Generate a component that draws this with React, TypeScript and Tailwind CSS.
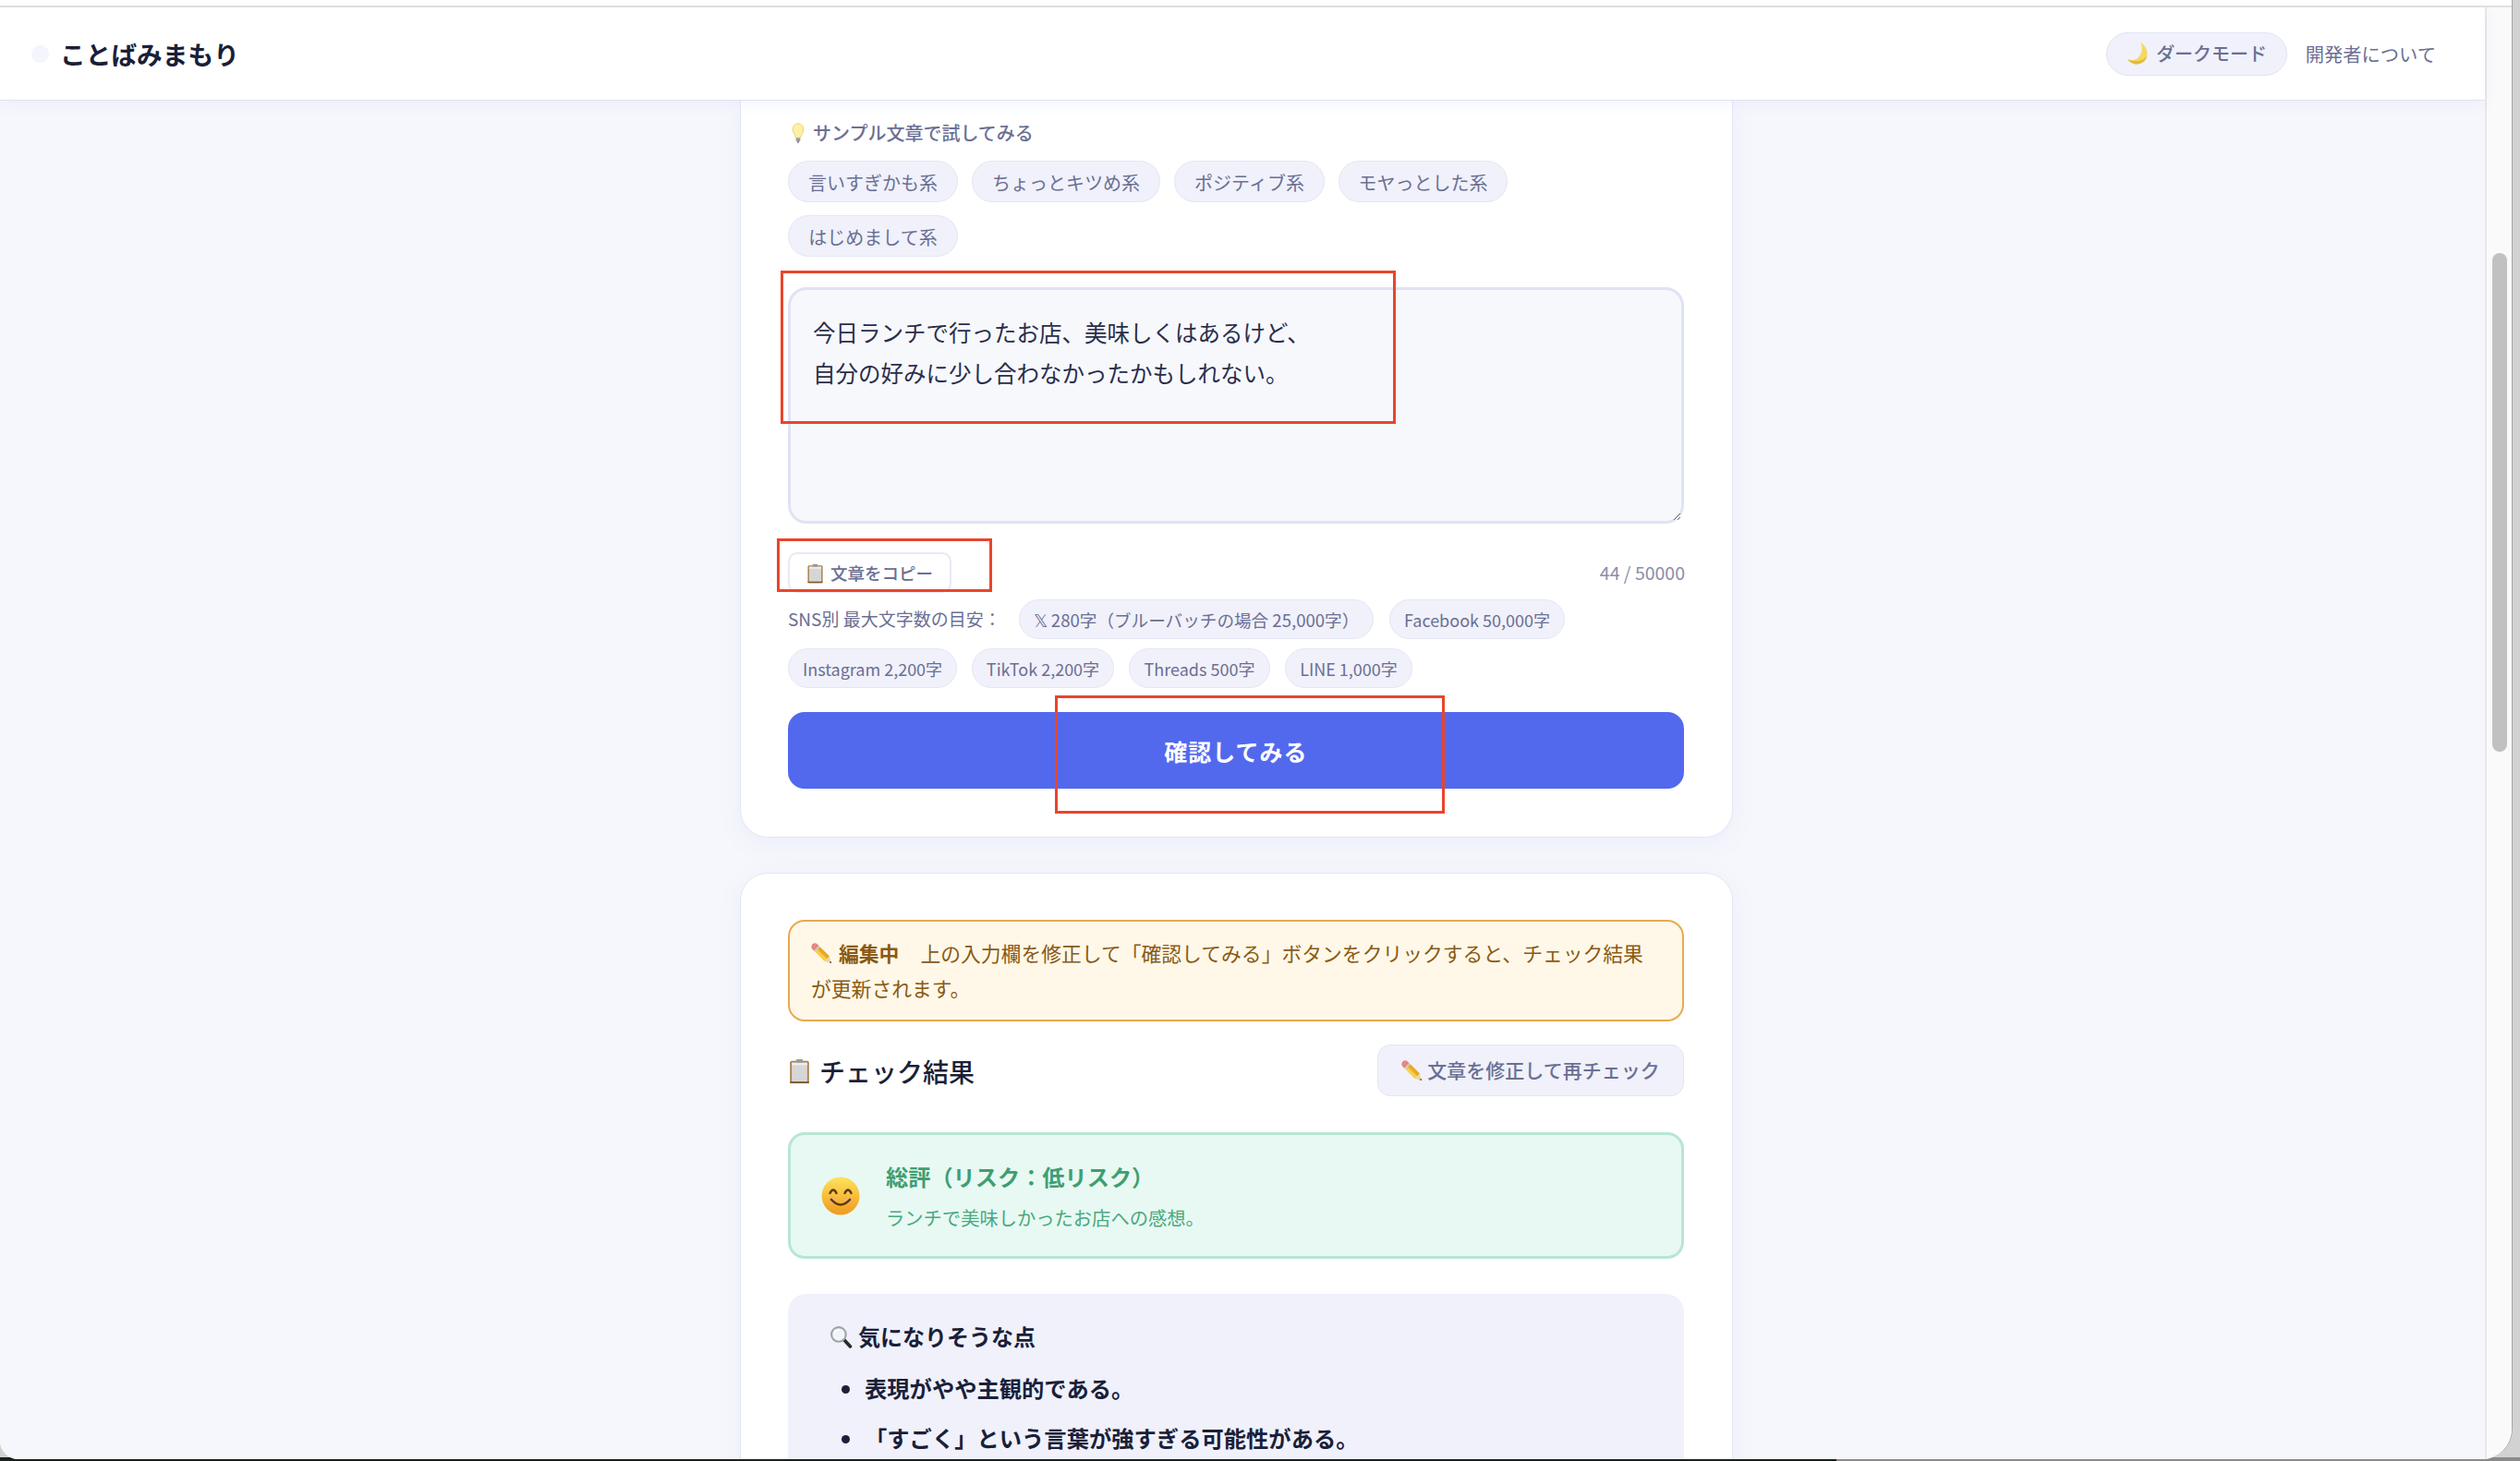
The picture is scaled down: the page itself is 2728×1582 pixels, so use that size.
const ClipboardIcon = ({ className }: { className: string }) => (
  <svg viewBox="0 0 24 30" className={className}>
    <rect x="1" y="3" width="22" height="26" rx="2" fill="#a9814a" />
    <rect x="3" y="5" width="18" height="22" fill="#d6d6d6" />
    <rect x="3" y="5" width="18" height="3" fill="#ececec" />
    <rect x="8" y="1" width="8" height="4" rx="1.5" fill="#9b9b9b" />
    <rect x="1" y="27" width="22" height="2" fill="#7d5a2c" />
  </svg>
);

const PencilIcon = ({ className }: { className: string }) => (
  <svg viewBox="0 0 24 24" className={className}>
    <path d="M.7 6.3 L6.3.7 Q4 -.5 2 1 Q-.5 3.5.7 6.3 Z" fill="#e8807c" />
    <path d="M.7 6.3 L6.3.7 L8.8 3.2 L3.2 8.8 Z" fill="#e8807c" />
    <path d="M3.2 8.8 L8.8 3.2 L10.3 4.7 L4.7 10.3 Z" fill="#c4c4c4" />
    <path d="M4.7 10.3 L10.3 4.7 L20.8 15.2 L15.2 20.8 Z" fill="#f7cf45" />
    <path d="M7.5 7.5 L10.3 4.7 L20.8 15.2 L18 18 Z" fill="#e6a92a" />
    <path d="M15.2 20.8 L20.8 15.2 L23 23 Z" fill="#ecd6a8" />
    <path d="M20.7 22.3 L22.3 20.7 L23 23 Z" fill="#333333" />
  </svg>
);

const BulbIcon = ({ className }: { className: string }) => (
  <svg viewBox="0 0 14 24" className={className}>
    <path
      d="M7 1 C3 1 1 4 1 7.5 C1 11 3.6 12.5 4.4 17 L9.6 17 C10.4 12.5 13 11 13 7.5 C13 4 11 1 7 1 Z"
      fill="#fdf0a8"
      stroke="#e8cf62"
      strokeWidth="1"
    />
    <rect x="4.6" y="17" width="4.8" height="4" rx="1" fill="#9c9ca4" />
    <path d="M5.8 21 L8.2 21 L7 23.5 Z" fill="#55555c" />
  </svg>
);

const MoonIcon = ({ className }: { className: string }) => (
  <svg viewBox="0 0 24 24" className={className}>
    <path
      d="M15 1 C19.5 4 22.5 8.5 21.5 14 C20.5 19.5 15.5 23 10 22.5 C6.5 22.2 3.5 20 2 17.5 C5 19 9 18.8 12 16.5 C16.5 13 17.5 6.5 15 1 Z"
      fill="#f6d860"
    />
    <path
      d="M21.5 14 C20.5 19.5 15.5 23 10 22.5 C6.5 22.2 3.5 20 2 17.5 C8 21 18 20 21.5 14 Z"
      fill="#e2b93e"
    />
  </svg>
);

const SmileIcon = ({ className }: { className: string }) => (
  <svg viewBox="0 0 42 42" className={className}>
    <defs>
      <linearGradient id="face" x1="0" y1="0" x2="0" y2="1">
        <stop offset="0" stopColor="#fde35c" />
        <stop offset="1" stopColor="#f09a1c" />
      </linearGradient>
    </defs>
    <circle cx="21" cy="21" r="20.5" fill="url(#face)" />
    <ellipse cx="13" cy="26" rx="5" ry="3.2" fill="#f7a98a" opacity="0.55" />
    <ellipse cx="29" cy="26" rx="5" ry="3.2" fill="#f7a98a" opacity="0.55" />
    <path d="M9.5 18 Q13 11 16.5 18" fill="none" stroke="#5d3a12" strokeWidth="2.4" strokeLinecap="round" />
    <path d="M25.5 18 Q29 11 32.5 18" fill="none" stroke="#5d3a12" strokeWidth="2.4" strokeLinecap="round" />
    <path d="M11 25 Q21 36 31 25" fill="none" stroke="#5d3a12" strokeWidth="2.6" strokeLinecap="round" />
  </svg>
);

const SearchIcon = ({ className }: { className: string }) => (
  <svg viewBox="0 0 24 24" className={className}>
    <path d="M14 14 L21.5 22" stroke="#2b2b2b" strokeWidth="3.6" strokeLinecap="round" />
    <circle cx="9.5" cy="9.5" r="7.5" fill="#f2f5f8" stroke="#9da3aa" strokeWidth="2" />
    <path d="M5 8 Q6.5 4.8 10 4.8" fill="none" stroke="#ffffff" strokeWidth="1.6" />
  </svg>
);

const samples = [
  ["言いすぎかも系", "w-[184px]"],
  ["ちょっとキツめ系", "w-[204px]"],
  ["ポジティブ系", "w-[163px]"],
  ["モヤっとした系", "w-[183px]"],
  ["はじめまして系", "w-[184px]"],
];

const snsRow = [
  ["Instagram 2,200字", "w-[183px] text-[18px]"],
  ["TikTok 2,200字", "w-[154px] text-[18px]"],
  ["Threads 500字", "w-[153px] text-[18px]"],
  ["LINE 1,000字", "w-[138px] text-[18px]"],
];

const SnsPill = ({ label, style }: { label: string; style: string }) => (
  <span
    className={`flex h-[43px] items-center justify-center rounded-[22px] border border-[#e3e6f3] bg-[#f0f1fa] pt-[1px] text-[#6b6f94] ${style}`}
  >
    {label}
  </span>
);

export default function App() {
  return (
    <div className="relative h-[1582px] w-[2728px] overflow-hidden bg-[#d2d2d2] font-['Noto_Sans_CJK_JP',sans-serif]">
      {/* desktop strip under the window */}
      <div className="absolute bottom-0 left-0 h-[4px] w-[1988px] bg-[#17211e]" />
      <div className="absolute bottom-0 left-[1988px] h-[4px] w-[740px] bg-[#8a8a8a]" />

      <div className="relative flex h-[1580px] w-[2720px] flex-col overflow-hidden rounded-bl-[20px] rounded-br-[33px] border-r border-[#a6a6a6] bg-white">
        <div className="h-[8px] shrink-0 border-b-2 border-[#e1e1e1] bg-white" />

        <div className="flex min-h-0 flex-1">
          <div className="flex min-w-0 flex-1 flex-col bg-[#f6f7fc]">
            <header className="relative z-10 flex h-[101px] shrink-0 items-center justify-between border-b border-[#dfe3f2] bg-white pr-[53px] pl-[34px] shadow-[0_3px_16px_rgba(83,107,238,0.07)]">
              <div className="flex items-center gap-[12px] pt-[2px]">
                <span className="h-[19px] w-[19px] rounded-full bg-[#f4f5fd]" />
                <span className="text-[27.7px] font-semibold text-[#1a1f3a]">ことばみまもり</span>
              </div>
              <div className="flex items-center gap-[20px]">
                <button className="flex h-[47px] w-[196px] items-center justify-center gap-[7px] rounded-[24px] border border-[#e0e3f2] bg-[#f0f1fa] text-[20px] font-medium text-[#6b6f94]">
                  <MoonIcon className="h-[26px] w-[26px]" />
                  ダークモード
                </button>
                <span className="text-[20.3px] text-[#6b6f94]">開発者について</span>
              </div>
            </header>

            <main className="flex min-h-0 flex-1 flex-col gap-[38px] overflow-hidden pl-[801px]">
              <section className="w-[1075px] shrink-0 rounded-b-[30px] border border-t-0 border-[#e3e6f3] bg-white px-[51px] pt-[26px] pb-[52px] shadow-[0_6px_28px_rgba(83,107,238,0.07)]">
                <div className="ml-[4px] flex h-[18px] items-center gap-[9px] text-[20px] font-medium text-[#6b6f94]">
                  <BulbIcon className="h-[23px] w-[14px]" />
                  サンプル文章で試してみる
                </div>
                <div className="mt-[21px] flex flex-wrap gap-x-[15px] gap-y-[14px]">
                  {samples.map(([label, width]) => (
                    <button
                      key={label}
                      className={`h-[45px] rounded-[23px] border border-[#e3e6f3] bg-[#f0f1fa] pt-[2px] text-[20px] text-[#6b6f94] ${width}`}
                    >
                      {label}
                    </button>
                  ))}
                </div>
                <textarea
                  readOnly
                  className="mt-[33px] block h-[256px] w-[970px] rounded-[20px] border-[3px] border-[#dfe3f2] bg-[#f7f8fc] pt-[24px] pr-[22px] pl-[24px] text-[24.5px] leading-[43.5px] text-[#2a2e4a] outline-none"
                  defaultValue={"今日ランチで行ったお店、美味しくはあるけど、\n自分の好みに少し合わなかったかもしれない。"}
                />
                <div className="mt-[31px] flex items-center justify-between">
                  <button className="flex h-[44px] w-[177px] items-center justify-center gap-[7px] rounded-[10px] border-2 border-[#e7e9f5] bg-white pt-[2px] text-[18.5px] font-medium text-[#6b6f94]">
                    <ClipboardIcon className="h-[22px] w-[19px]" />
                    文章をコピー
                  </button>
                  <span className="text-[19.5px] text-[#8a8eab]">44 / 50000</span>
                </div>
                <div className="mt-[7px] flex items-center gap-[17px]">
                  <span className="w-[233px] text-[19px] text-[#6b6f94]">SNS別 最大文字数の目安：</span>
                  <SnsPill label="𝕏 280字（ブルーバッチの場合 25,000字）" style="w-[384px] text-[18.6px]" />
                  <SnsPill label="Facebook 50,000字" style="w-[190px] text-[18px]" />
                </div>
                <div className="mt-[10px] flex gap-[16px]">
                  {snsRow.map(([label, style]) => (
                    <SnsPill key={label} label={label} style={style} />
                  ))}
                </div>
                <button className="mt-[26px] block h-[83px] w-[970px] rounded-[18px] bg-[#5269ee] pt-[2px] text-[25px] font-bold tracking-[1px] text-white">
                  確認してみる
                </button>
              </section>

              <section className="w-[1075px] shrink-0 rounded-[30px] border border-[#e3e6f3] bg-white px-[51px] pt-[50px] pb-[50px] shadow-[0_6px_28px_rgba(83,107,238,0.07)]">
                <div className="w-[970px] rounded-[18px] border-2 border-[#e8a94f] bg-[#fff8e8] px-[23px] py-[15px] text-[21.8px] leading-[38px] text-[#8a5a14]">
                  <PencilIcon className="mr-[7px] inline-block h-[23px] w-[23px] align-[-3px]" />
                  <span className="mr-[23px] font-bold">編集中</span>
                  上の入力欄を修正して「確認してみる」ボタンをクリックすると、チェック結果が更新されます。
                </div>

                <div className="mt-[25px] flex w-[970px] items-center justify-between">
                  <h2 className="flex items-center gap-[9px] pt-[2px] text-[28px] font-medium text-[#1a1f3a]">
                    <ClipboardIcon className="h-[28px] w-[25px]" />
                    チェック結果
                  </h2>
                  <button className="flex h-[56px] w-[332px] items-center justify-center gap-[5px] rounded-[14px] border border-[#e3e6f3] bg-[#f0f1fa] text-[21px] font-medium text-[#6b6f94]">
                    <PencilIcon className="h-[23px] w-[23px]" />
                    文章を修正して再チェック
                  </button>
                </div>

                <div className="mt-[39px] flex h-[137px] w-[970px] items-center gap-[28px] rounded-[18px] border-[3px] border-[#b8e6d2] bg-[#e8f9f3] pl-[33px]">
                  <SmileIcon className="h-[42px] w-[42px]" />
                  <div>
                    <div className="text-[24.2px] font-bold text-[#3f9e72]">総評（リスク：低リスク）</div>
                    <div className="mt-[11px] text-[20.3px] text-[#4aa87f]">ランチで美味しかったお店への感想。</div>
                  </div>
                </div>

                <div className="mt-[38px] w-[970px] rounded-[20px] bg-[#f0f1fa] px-[45px] pt-[28px] pb-[40px] text-[#1a1f3a]">
                  <h3 className="flex items-center gap-[6px] text-[24px] font-bold">
                    <SearchIcon className="h-[25px] w-[25px]" />
                    気になりそうな点
                  </h3>
                  <ul className="mt-[20px] flex list-disc flex-col gap-[18px] pl-[38px] text-[24.3px] font-semibold">
                    <li>表現がやや主観的である。</li>
                    <li>「すごく」という言葉が強すぎる可能性がある。</li>
                  </ul>
                </div>
              </section>
            </main>
          </div>

          <div className="w-[29px] shrink-0 border-l-2 border-[#e8e8e8] bg-[#fafafa] pt-[266px] pl-[6px]">
            <div className="h-[540px] w-[16px] rounded-full bg-[#c1c1c1]" />
          </div>
        </div>

        {/* review markers drawn over the screenshot */}
        <div className="pointer-events-none absolute top-[293px] left-[845px] h-[166px] w-[666px] border-[3px] border-[#e8452c]" />
        <div className="pointer-events-none absolute top-[583px] left-[841px] h-[58px] w-[233px] border-[3px] border-[#e8452c]" />
        <div className="pointer-events-none absolute top-[753px] left-[1142px] h-[128px] w-[422px] border-[3px] border-[#e8452c]" />
      </div>
    </div>
  );
}
